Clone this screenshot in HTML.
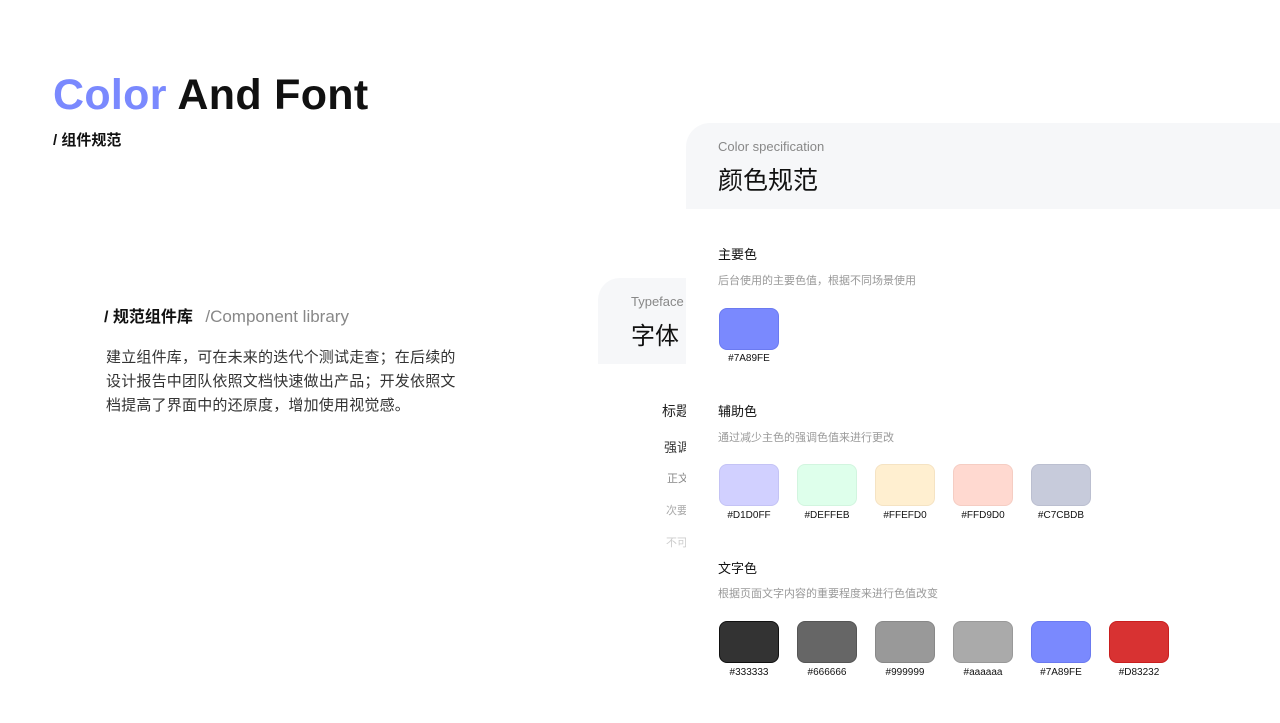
<!DOCTYPE html>
<html><head><meta charset="utf-8"><style>
*{margin:0;padding:0;box-sizing:border-box}
body{width:1280px;height:720px;background:#fff;position:relative;overflow:hidden;font-family:"Liberation Sans","Noto Sans CJK SC",sans-serif;color:#111}
.a{position:absolute;white-space:nowrap}
.sw{position:absolute;width:60px;height:42px;border-radius:8px}
.lb{position:absolute;font-size:10px;color:#111;width:80px;text-align:center}
</style></head><body>
<div class="a" style="left:53px;top:71px;font-size:43px;font-weight:bold;letter-spacing:0.3px"><span style="color:#7A89FE">Color</span> And Font</div>
<div class="a" style="left:53px;top:129px;font-size:15px;font-weight:bold">/ 组件规范</div>
<div class="a" style="left:104px;top:303px;font-size:16px;font-weight:bold">/ 规范组件库 <span style="font-weight:normal;color:#888;margin-left:8px;font-size:17px">/Component library</span></div>
<div class="a" style="left:106px;top:346px;font-size:15px;letter-spacing:0.2px;line-height:24px;color:#333">建立组件库，可在未来的迭代个测试走查；在后续的<br>设计报告中团队依照文档快速做出产品；开发依照文<br>档提高了界面中的还原度，增加使用视觉感。</div>

<div class="a" style="left:598px;top:278px;width:100px;height:86px;background:#f6f7f9;border-top-left-radius:22px"></div>
<div class="a" style="left:631px;top:294px;font-size:13px;color:#888">Typeface</div>
<div class="a" style="left:631px;top:316px;font-size:24px">字体</div>
<div class="a" style="left:662px;top:401px;font-size:14px;color:#222">标题</div>
<div class="a" style="left:664px;top:437px;font-size:13px;color:#333">强调</div>
<div class="a" style="left:667px;top:470px;font-size:11px;color:#888">正文</div>
<div class="a" style="left:666px;top:502px;font-size:11px;color:#aaa">次要</div>
<div class="a" style="left:666px;top:534px;font-size:11px;color:#ccc">不可</div>

<div class="a" style="left:686px;top:123px;width:594px;height:600px;background:#fff;border-top-left-radius:24px;overflow:hidden">
<div style="height:86px;background:#f6f7f9"></div></div>
<div class="a" style="left:718px;top:139px;font-size:13px;color:#888">Color specification</div>
<div class="a" style="left:718px;top:161px;font-size:25px">颜色规范</div>

<div class="a" style="left:718px;top:244px;font-size:13px">主要色</div>
<div class="a" style="left:718px;top:272px;font-size:11px;color:#999">后台使用的主要色值，根据不同场景使用</div>
<div class="sw" style="left:719px;top:308px;background:#7A89FE;border:1px solid #6b7af0"></div>
<div class="lb" style="left:709px;top:353px">#7A89FE</div>

<div class="a" style="left:718px;top:401px;font-size:13px">辅助色</div>
<div class="a" style="left:718px;top:429px;font-size:11px;color:#999">通过减少主色的强调色值来进行更改</div>
<div class="sw" style="left:719px;top:464px;background:#D1D0FF;border:1px solid #c4c3f5"></div>
<div class="sw" style="left:797px;top:464px;background:#DEFFEB;border:1px solid #d2f5df"></div>
<div class="sw" style="left:875px;top:464px;background:#FFEFD0;border:1px solid #f5e3c3"></div>
<div class="sw" style="left:953px;top:464px;background:#FFD9D0;border:1px solid #f5cdc3"></div>
<div class="sw" style="left:1031px;top:464px;background:#C7CBDB;border:1px solid #bbbfd0"></div>
<div class="lb" style="left:709px;top:510px">#D1D0FF</div>
<div class="lb" style="left:787px;top:510px">#DEFFEB</div>
<div class="lb" style="left:865px;top:510px">#FFEFD0</div>
<div class="lb" style="left:943px;top:510px">#FFD9D0</div>
<div class="lb" style="left:1021px;top:510px">#C7CBDB</div>

<div class="a" style="left:718px;top:558px;font-size:13px">文字色</div>
<div class="a" style="left:718px;top:585px;font-size:11px;color:#999">根据页面文字内容的重要程度来进行色值改变</div>
<div class="sw" style="left:719px;top:621px;background:#333;border:1px solid #111"></div>
<div class="sw" style="left:797px;top:621px;background:#666;border:1px solid #555"></div>
<div class="sw" style="left:875px;top:621px;background:#999;border:1px solid #888"></div>
<div class="sw" style="left:953px;top:621px;background:#aaa;border:1px solid #999"></div>
<div class="sw" style="left:1031px;top:621px;background:#7A89FE;border:1px solid #6b7af0"></div>
<div class="sw" style="left:1109px;top:621px;background:#D83232;border:1px solid #c91e1e"></div>
<div class="lb" style="left:709px;top:667px">#333333</div>
<div class="lb" style="left:787px;top:667px">#666666</div>
<div class="lb" style="left:865px;top:667px">#999999</div>
<div class="lb" style="left:943px;top:667px">#aaaaaa</div>
<div class="lb" style="left:1021px;top:667px">#7A89FE</div>
<div class="lb" style="left:1099px;top:667px">#D83232</div>
</body></html>
